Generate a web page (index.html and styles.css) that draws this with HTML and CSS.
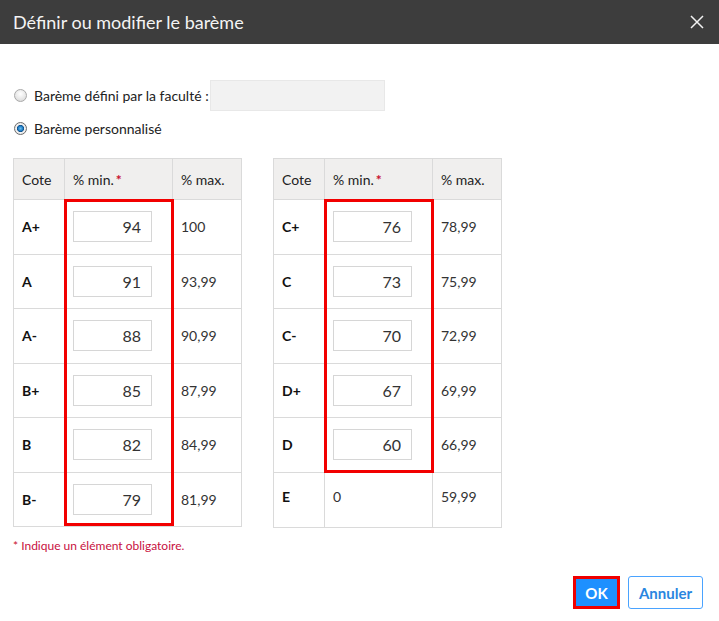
FILE: index.html
```html
<!DOCTYPE html>
<html lang="fr">
<head>
  <meta charset="UTF-8">
  <meta name="viewport" content="width=device-width, initial-scale=1.0">
  <title>Définir ou modifier le barème</title>
  <link rel="stylesheet" href="styles.css">
</head>
<body>
  <div class="dialog">
    <div class="dialog-header">
      <h1>Définir ou modifier le barème</h1>
      <button class="close-btn" aria-label="Fermer">
        <svg width="14" height="14" viewBox="0 0 14 14">
          <path d="M1 1 L13 13 M13 1 L1 13" stroke="#f2f2f2" stroke-width="1.5" fill="none"/>
        </svg>
      </button>
    </div>

    <div class="dialog-body">
      <!-- Choix du barème -->
      <div class="options">
        <label class="option">
          <input type="radio" name="bareme">
          <span>Barème défini par la faculté :</span>
          <span class="faculty-box"></span>
        </label>
        <label class="option">
          <input type="radio" name="bareme" checked>
          <span>Barème personnalisé</span>
        </label>
      </div>

      <div class="tables">
        <div class="table-wrap">
          <table class="grade-table">
            <thead>
              <tr><th class="col-cote">Cote</th><th class="col-min">% min.<span class="req">*</span></th><th class="col-max">% max.</th></tr>
            </thead>
            <tbody>
              <tr><td class="cote">A+</td><td><input type="text" value="94"></td><td>100</td></tr>
              <tr><td class="cote">A</td><td><input type="text" value="91"></td><td>93,99</td></tr>
              <tr><td class="cote">A-</td><td><input type="text" value="88"></td><td>90,99</td></tr>
              <tr><td class="cote">B+</td><td><input type="text" value="85"></td><td>87,99</td></tr>
              <tr><td class="cote">B</td><td><input type="text" value="82"></td><td>84,99</td></tr>
              <tr><td class="cote">B-</td><td><input type="text" value="79"></td><td>81,99</td></tr>
            </tbody>
          </table>
          <div class="highlight highlight-6"></div>
        </div>

        <div class="table-wrap">
          <table class="grade-table">
            <thead>
              <tr><th class="col-cote">Cote</th><th class="col-min">% min.<span class="req">*</span></th><th class="col-max">% max.</th></tr>
            </thead>
            <tbody>
              <tr><td class="cote">C+</td><td><input type="text" value="76"></td><td>78,99</td></tr>
              <tr><td class="cote">C</td><td><input type="text" value="73"></td><td>75,99</td></tr>
              <tr><td class="cote">C-</td><td><input type="text" value="70"></td><td>72,99</td></tr>
              <tr><td class="cote">D+</td><td><input type="text" value="67"></td><td>69,99</td></tr>
              <tr><td class="cote">D</td><td><input type="text" value="60"></td><td>66,99</td></tr>
              <tr class="fixed-row"><td class="cote">E</td><td>0</td><td>59,99</td></tr>
            </tbody>
          </table>
          <div class="highlight highlight-5"></div>
        </div>
      </div>

      <p class="required-note"><span class="req">*</span> Indique un élément obligatoire.</p>
    </div>

    <div class="dialog-footer">
      <button class="btn btn-primary">OK</button>
      <button class="btn btn-secondary">Annuler</button>
    </div>
  </div>
</body>
</html>
```

FILE: styles.css
```css
body {
  margin: 0;
  padding: 0;
  font-family: Lato, "Open Sans", sans-serif;
  color: #222;
  background: #ffffff;
}

.dialog {
  width: 719px;
  height: 621px;
  display: flex;
  flex-direction: column;
}

.dialog-header {
  height: 44px;
  background-color: #3d3d3d;
  display: flex;
  align-items: center;
  justify-content: space-between;
  padding: 0 15px 0 13px;
}

.dialog-header h1 {
  margin: 0;
  font-size: 18px;
  font-weight: normal;
  color: #f4f4f4;
}

.close-btn {
  background: none;
  border: none;
  padding: 0;
  width: 14px;
  height: 14px;
  cursor: pointer;
}

.dialog-body {
  padding: 36px 13px 0 13px;
  flex: 1;
}

/* Radio choices */
.options {
  display: flex;
  flex-direction: column;
  gap: 2px;
}

.option {
  display: flex;
  align-items: center;
  height: 31px;
  font-size: 14px;
  color: #222;
}

.option input {
  appearance: none;
  -webkit-appearance: none;
  margin: 0 7px 0 1px;
  width: 13px;
  height: 13px;
  border-radius: 50%;
  border: 1px solid #a9a9a9;
  background: radial-gradient(circle at 50% 35%, #ffffff 0%, #e6e6e6 60%, #cfcfcf 100%);
  box-sizing: border-box;
}

.option input:checked {
  border-color: #6b6b6b;
  background: radial-gradient(circle at 50% 50%, #6cc0f0 0%, #1f7cc4 30%, #0d4f8a 42%, #f2f2f2 50%, #dcdcdc 100%);
}

.faculty-box {
  display: inline-block;
  width: 173px;
  height: 29px;
  margin-left: 1px;
  background: #f2f2f2;
  border: 1px solid #e8e8e8;
}

/* Tables */
.tables {
  display: flex;
  gap: 31px;
  margin-top: 14px;
}

.table-wrap {
  position: relative;
}

.grade-table {
  border-collapse: collapse;
  font-size: 14px;
}

.grade-table th,
.grade-table td {
  border: 1px solid #dadada;
  text-align: left;
  padding: 0 8px;
}

.grade-table th {
  background-color: #f0efee;
  font-weight: normal;
  height: 40px;
  color: #222;
}

.grade-table td {
  height: 53.5px;
  color: #333;
}

.col-cote { width: 34px; }
.col-min { width: 91px; }
.col-max { width: 52px; }

.grade-table td.cote {
  font-weight: bold;
  color: #111;
}

.grade-table .fixed-row td {
  vertical-align: top;
  padding-top: 15px;
  height: 39px;
}

.grade-table input {
  width: 79px;
  height: 31px;
  box-sizing: border-box;
  border: 1px solid #d6d6d6;
  text-align: right;
  padding: 0 10px 0 4px;
  font-family: Lato, "Open Sans", sans-serif;
  font-size: 16px;
  color: #333;
  display: block;
}

.req {
  color: #c8102e;
  font-weight: bold;
  margin-left: 2px;
}

/* Red annotation boxes */
.highlight {
  position: absolute;
  left: 51px;
  top: 41px;
  width: 104px;
  border: 3px solid #f20000;
  pointer-events: none;
}

.highlight-6 { height: 321px; }
.highlight-5 { height: 268px; }

.required-note {
  margin: 10px 0 0 0;
  font-size: 12px;
  color: #c8103e;
}

.required-note .req {
  font-weight: normal;
  margin-left: 0;
}

/* Footer buttons */
.dialog-footer {
  display: flex;
  justify-content: flex-end;
  gap: 8px;
  padding: 0 16px 12px 0;
}

.btn {
  height: 33px;
  font-family: Lato, "Open Sans", sans-serif;
  font-size: 15px;
  font-weight: bold;
  border-radius: 3px;
  cursor: pointer;
}

.btn-primary {
  width: 47px;
  background-color: #1e90ff;
  color: #ffffff;
  border: 3px solid #f00000;
  border-radius: 0;
}

.btn-secondary {
  width: 75px;
  background: #ffffff;
  color: #2a86e0;
  border: 1px solid #4aa3ff;
}
```
